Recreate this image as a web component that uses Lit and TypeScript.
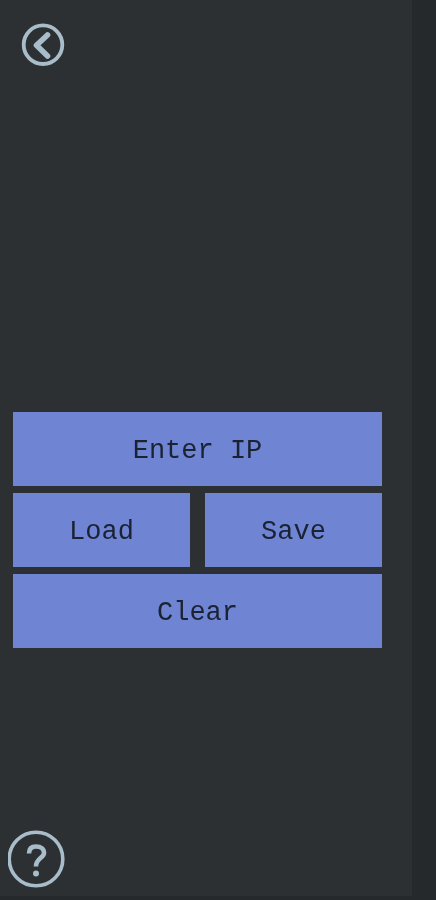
import { LitElement, html, css } from "lit";
import { customElement } from "lit/decorators.js";

@customElement("app-root")
export class AppRoot extends LitElement {
  static styles = css`
    :host { display: block; width: 436px; height: 900px; background: #26292c; overflow: hidden; }
    .panel { width: 412px; height: 896px; box-sizing: border-box; background: #2c3033; padding: 23px 0 8px 8px; display: flex; flex-direction: column; }
    .icon { display: block; filter: blur(0.7px); }
    .back { margin-left: 13px; }
    .grid { margin: 345px 0 0 5px; width: 369px; display: grid; grid-template-columns: 177px 177px; column-gap: 15px; row-gap: 7px; }
    .btn { height: 74px; box-sizing: border-box; padding-top: 4px; background: #6f84d2; display: flex; align-items: center; justify-content: center; font: 27px "Liberation Mono", monospace; color: #1a2233; filter: blur(0.5px); }
    .wide { grid-column: 1 / 3; }
    .help { margin-top: auto; }
  `;
  render() {
    return html`<div class="panel">
      <svg class="back icon" width="44" height="44" viewBox="0 0 44 44" fill="none" stroke="#a9bcc9">
        <circle cx="22" cy="21.7" r="19.3" stroke-width="3.8"/>
        <path d="M26.5 12 L15.5 22.3 L26.5 33" stroke-width="5.6" stroke-linejoin="round" stroke-linecap="round"/>
      </svg>
      <div class="grid">
        <div class="btn wide">Enter IP</div>
        <div class="btn">Load</div>
        <div class="btn">Save</div>
        <div class="btn wide">Clear</div>
      </div>
      <svg class="help icon" width="58" height="58" viewBox="0 0 58 58" fill="none" stroke="#a9bcc9">
        <circle cx="28" cy="29" r="26.8" stroke-width="3.6"/>
        <path d="M21 23.5 C21 18.5 24 16.5 28 16.5 C33 16.5 36 19 36 23 C36 28 28 28 28 36.5" stroke-width="4.6"/>
        <circle cx="28" cy="43.5" r="3" fill="#a9bcc9" stroke="none"/>
      </svg>
    </div>`;
  }
}
